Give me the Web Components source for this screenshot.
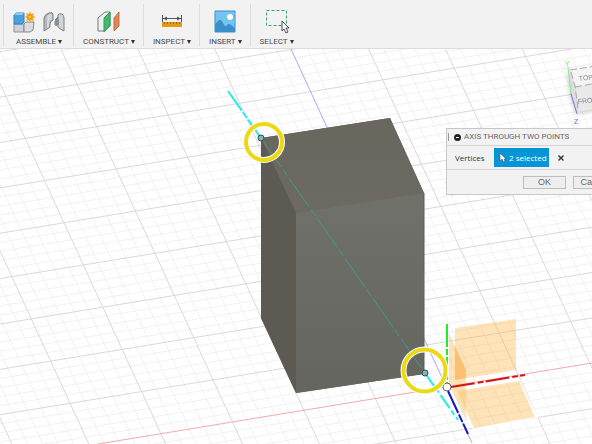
<!DOCTYPE html>
<html lang="en">
<head>
<meta charset="utf-8">
<meta name="viewport" content="width=device-width, initial-scale=1">
<title>Axis Through Two Points</title>
<style>
    html, body{
        height: 100%;
        margin: 0;
        overflow: hidden;
        font-family: Roboto, "Liberation Sans", sans-serif;
    }
</style>
</head>
<body>
<cad-app>
    <tool-bar slot="toolbar">
        <tool-group label="Assemble">
            <svg width="22" height="24" viewBox="0 0 22 24">
                <path d="M1 14h10v8H1z" fill="#cfd3d8" stroke="#8d9196"/>
                <path d="M11 14l2-2h8l-1 8-3 2h-6z" fill="#dcdde0" stroke="#85898e"/>
                <path d="M1 5l2-2h8v9l-2 2H1z" fill="#4a9fde" stroke="#3483c0"/>
                <path d="M1 5l2-2h8l-2 2z" fill="#8dccf4"/>
                <path d="M17 1l1 3 3-1-1 3 3 1-3 1 1 3-3-1-1 3-1-3-3 1 1-3-3-1 3-1-1-3 3 1z" fill="#f9a51a"/>
                <circle cx="17" cy="7" r="2" fill="#ffd04a" stroke="#e28714"/>
            </svg>
            <svg width="22" height="24" viewBox="0 0 22 24">
                <path d="M1 8q1-4 5-5 4-1 4 1v6q-3 1-3 4v3l-6 4z" fill="#b5b9bd" stroke="#7c8085"/>
                <path d="M4 8q0-3 3-4 2 0 2 1v4q-3 1-3 4v4l-2 1z" fill="#d5d7d9"/>
                <path d="M12 11l3-3V5q1-2 4-1 2 1 2 4v13l-5-3q-1-3-4-3z" fill="#d2d5d7" stroke="#7c8085"/>
                <path d="M12 11l4-3v7q-2 1-4 0z" fill="#8d9194"/>
                <path d="M12 10l3-3" stroke="#3f8fd0"/>
            </svg>
        </tool-group>
        <tool-group label="Construct">
            <svg width="24" height="24" viewBox="0 0 24 24">
                <path d="M1 8l7-6h5v14l-6 5H1z" fill="#eeefef" stroke="#767a7d"/>
                <path d="M7 8l6-6v14l-6 6z" fill="#43b96c" stroke="#309e59"/>
                <path d="M17 8l5-6v14l-5 5z" fill="#df8652" stroke="#c27547"/>
            </svg>
        </tool-group>
        <tool-group label="Inspect">
            <svg width="22" height="24" viewBox="0 0 22 24">
                <path d="M1.500 5v8M20.500 5v8M2 8.500h18" stroke="#55585b" fill="none"/>
                <path d="M2 8.500l4-2v4zM20 8.500l-4-2v4z" fill="#55585b"/>
                <path d="M1 12h20v5H1z" fill="#e59a17"/>
                <path d="M3.500 12v2M6.500 12v2M9.500 12v2M12.500 12v2M15.500 12v2M18.500 12v2" stroke="#996211" fill="none"/>
            </svg>
        </tool-group>
        <tool-group label="Insert">
            <svg width="22" height="24" viewBox="0 0 22 24">
                <path d="M1 1h20v21H1z" fill="#75c3f3" stroke="#3d92c9"/>
                <circle cx="16" cy="7" r="3" fill="#fffbe6"/>
                <path d="M1 15q3-5 5-5 2 0 4 5 2 2 3 0 2-2 4 0l4 3v4H1z" fill="#3a90c8"/>
            </svg>
        </tool-group>
        <tool-group label="Select">
            <svg width="24" height="24" viewBox="0 0 24 24">
                <path d="M1.500 .5h20v15h-20z" fill="none" stroke="#3da466" stroke-dasharray="3 2"/>
                <path d="M17 11v10l2-2 2 4 2-1-2-4h3z" fill="#fff" stroke="#4c4f52"/>
            </svg>
        </tool-group>
    </tool-bar>
    <model-view></model-view>
    <view-cube slot="cube"></view-cube>
    <command-dialog slot="dialog" heading="Axis through two points">
        <selection-input label="Vertices" count="2"></selection-input>
    </command-dialog>
</cad-app>

<script>
class CadApp extends HTMLElement {
    constructor() {
        super()
        this.attachShadow({ mode: 'open' }).innerHTML = `
            <style>
                :host{
                    display: flex;
                    flex-direction: column;
                    height: 100%;
                }
                main{
                    position: relative;
                    flex: 1;
                    min-height: 0;
                    overflow: hidden;
                }
                /* panels floating over the canvas */
                slot[name=cube]::slotted(*){
                    position: absolute;
                    top: 7px;
                    right: -22px;
                }
                slot[name=dialog]::slotted(*){
                    position: absolute;
                    top: 79px;
                    right: -34px;
                }
            </style>
            <slot name="toolbar"></slot>
            <main>
                <slot></slot>
                <slot name="cube"></slot>
                <slot name="dialog"></slot>
            </main>
        `
    }
}

class ToolBar extends HTMLElement {
    constructor() {
        super()
        this.attachShadow({ mode: 'open' }).innerHTML = `
            <style>
                :host{
                    display: flex;
                    box-sizing: border-box;
                    height: 49px;
                    padding: 4px 3px 2px;
                    background-color: #f2f2f2;
                    border-bottom: 1px solid #dcdcdc;
                }
            </style>
            <slot></slot>
        `
    }
}

class ToolGroup extends HTMLElement {
    constructor() {
        super()
        this._shadowDom = this.attachShadow({ mode: 'open' })
    }

    connectedCallback() {
        this._shadowDom.innerHTML = `
            <style>
                :host{
                    display: flex;
                    border-left: 1px solid #dcdcdc;
                }
                button{
                    display: flex;
                    flex-direction: column;
                    align-items: center;
                    gap: 3px;
                    margin: 0;
                    padding: 6px 8px 0 9px;
                    border: 0;
                    background: none;
                    color: #4a4a4a;
                    font: 8px/10px Roboto, "Liberation Sans", sans-serif;
                    text-transform: uppercase;
                }
                .icons{
                    display: flex;
                    gap: 8px;
                    height: 24px;
                }
                .label{
                    display: flex;
                    align-items: center;
                    gap: 2px;
                }
                .arrow{
                    border: 2px solid transparent;
                    border-top: 4px solid #333;
                    border-bottom: 0;
                }
            </style>
            <button type="button">
                <span class="icons"><slot></slot></span>
                <span class="label">${this.getAttribute('label')}<span class="arrow"></span></span>
            </button>
        `
    }
}

class ModelView extends HTMLElement {
    constructor() {
        super()
        this._shadowDom = this.attachShadow({ mode: 'open' })
    }

    // the ground grid, seen in parallel projection from the origin
    grid() {
        const origin = [447, 387]
        const a = [71.5, -11.7]
        const b = [19.4, 42.2]
        let minor = ''
        let major = ''
        const line = (from, dir) =>
            `M${from[0] - dir[0] * 14} ${from[1] - dir[1] * 14}L${from[0] + dir[0] * 14} ${from[1] + dir[1] * 14}`
        for (let i = -60; i <= 60; i++) {
            if (i === 0) continue
            const k = i / 5
            const d = line([origin[0] + a[0] * k, origin[1] + a[1] * k], b)
                + line([origin[0] + b[0] * k, origin[1] + b[1] * k], a)
            if (i % 5) minor += d
            else major += d
        }
        return `<path d="${minor}" stroke="#f1f1f1"/><path d="${major}" stroke="#d9d9d9"/>`
    }

    connectedCallback() {
        this._shadowDom.innerHTML = `
            <style>
                :host{
                    display: block;
                    height: 100%;
                    background-color: #fff;
                }
                svg{
                    display: block;
                    width: 100%;
                    height: 100%;
                }
            </style>
            <svg viewBox="0 49 592 395" preserveAspectRatio="xMidYMid slice" fill="none" role="img" aria-label="Box with an axis through two corners">
                <defs>
                    <linearGradient id="top" x1="0" y1="0" x2="0" y2="1">
                        <stop offset="0" stop-color="#69665d"/><stop offset="1" stop-color="#6c6a63"/>
                    </linearGradient>
                    <linearGradient id="front" x1="0" y1="0" x2="0" y2="1">
                        <stop offset="0" stop-color="#70716b"/><stop offset="1" stop-color="#656560"/>
                    </linearGradient>
                </defs>
                ${this.grid()}
                <path d="M98 444L592 363" stroke="#f4a9ae"/>
                <path d="M291 49L472 443" stroke="#aaa8f2"/>

                <path d="M261 138L390 118L424 193V374L296 393L261 318Z" fill="#66655e"/>
                <path d="M261 138L390 118L424 193L296 213Z" fill="url(#top)"/>
                <path d="M261 138L296 213V393L261 318Z" fill="#5c5a53"/>
                <path d="M296 213L424 193V374L296 393Z" fill="url(#front)"/>
                <path d="M424 193V374" stroke="#5e5f59"/>

                <path d="M456 391L519 380L537 417L474 429Z" stroke="#fff" stroke-width="2"/>
                <g fill="#ffbd55" fill-opacity=".42">
                    <path d="M455 328L516 319V370L455 380Z"/>
                    <path d="M449 333L466 370V421L449 384Z"/>
                    <path d="M457 391L519 381L535 417L474 428Z"/>
                </g>
                <path d="M455 346L466 370V378L455 380Z" fill="#f7a840" fill-opacity=".4"/>

                <g stroke-width="2">
                    <path d="M447 324V383" stroke="#22ee27" stroke-dasharray="23 2 6 2"/>
                    <path d="M451 387L525 375" stroke="#d81212" stroke-dasharray="24 3 6 2"/>
                    <path d="M448 391L468 434" stroke="#1218c6" stroke-dasharray="24 2 8 2"/>
                    <path d="M228 91L261 138" stroke="#20efe4" stroke-dasharray="24 2 7 2"/>
                    <path d="M425 373L458 420" stroke="#20efe4" stroke-dasharray="16 3 5 3"/>
                </g>
                <path d="M261 138L425 373" stroke="#3d9c8a" stroke-dasharray="35 3 8 3"/>
                <circle cx="447" cy="387" r="4" fill="#fff" stroke="#666"/>
                <circle cx="261" cy="138" r="3" fill="#7cb8b8" stroke="#344c4e"/>
                <circle cx="425" cy="373" r="3" fill="#7cb8b8" stroke="#344c4e"/>

                <g stroke="#fff" stroke-width="6">
                    <circle cx="264" cy="142" r="18"/>
                    <circle cx="424.500" cy="370.500" r="21"/>
                </g>
                <g stroke="#ecd915" stroke-width="4">
                    <circle cx="264" cy="142" r="18"/>
                    <circle cx="424.500" cy="370.500" r="21"/>
                </g>
            </svg>
        `
    }
}

class ViewCube extends HTMLElement {
    constructor() {
        super()
        this.attachShadow({ mode: 'open' }).innerHTML = `
            <style>
                :host{
                    display: block;
                    width: 54px;
                    height: 70px;
                }
                svg{
                    display: block;
                    filter: drop-shadow(-1px 2px 2px #0003);
                }
                text{
                    font: 7px "Liberation Sans", sans-serif;
                }
            </style>
            <svg width="54" height="70" viewBox="0 0 54 70" fill="none">
                <path d="M10 14L50 8L54 24L15 32Z" fill="#f4f4f4"/>
                <path d="M15 32L54 24V50L18 56Z" fill="#e9e9eb"/>
                <path d="M10 14L15 32L18 56L12 38Z" fill="#dedee2"/>
                <path d="M10 14L50 8M15 31L54 24M11 16L15 30L18 52" stroke="#aaa" stroke-dasharray="7 3"/>
                <path d="M8 11L11 38" stroke="#8ee68e"/>
                <path d="M11 38L17 58" stroke="#7777d8"/>
                <text x="5" y="10" fill="#78e878">Y</text>
                <text x="14" y="68" fill="#6a6ae0">Z</text>
                <text x="19" y="25" fill="#8c8c8c" transform="rotate(-6 19 25)">TOP</text>
                <text x="18" y="48" fill="#858585" transform="rotate(-6 18 48)">FRONT</text>
            </svg>
        `
    }
}

class CommandDialog extends HTMLElement {
    constructor() {
        super()
        this._shadowDom = this.attachShadow({ mode: 'open' })
    }

    connectedCallback() {
        this._shadowDom.innerHTML = `
            <style>
                :host{
                    display: block;
                    box-sizing: border-box;
                    width: 180px;
                    background-color: #f2f2f2;
                    border: 1px solid #c8c8c8;
                    color: #666;
                    font-size: 8px;
                    line-height: 16px;
                }
                header{
                    display: flex;
                    align-items: center;
                    gap: 3px;
                    padding-left: 1px;
                    border-bottom: 1px solid #d2d2d2;
                }
                h2{
                    margin: 0;
                    font-size: inherit;
                    font-weight: 400;
                    text-transform: uppercase;
                }
                .grip{
                    width: 1px;
                    height: 8px;
                    margin-right: 2px;
                    background-color: #999;
                }
                footer{
                    display: flex;
                    justify-content: flex-end;
                    gap: 7px;
                    padding: 6px 9px 5px;
                    border-top: 1px solid #d2d2d2;
                }
                footer button{
                    box-sizing: border-box;
                    width: 43px;
                    height: 13px;
                    padding: 0;
                    border: 1px solid #bdbdbd;
                    background-color: #eee;
                    color: #666;
                    font: 9px/11px "Liberation Sans", sans-serif;
                }
            </style>
            <header>
                <span class="grip"></span>
                <svg width="7" height="7" viewBox="0 0 7 7"><circle cx="3.500" cy="3.500" r="3.500" fill="#222"/><path d="M2 3.500h3" stroke="#fff"/></svg>
                <h2>${this.getAttribute('heading')}</h2>
            </header>
            <slot></slot>
            <footer>
                <button type="button">OK</button>
                <button type="button">Cancel</button>
            </footer>
        `
    }
}

class SelectionInput extends HTMLElement {
    constructor() {
        super()
        this._shadowDom = this.attachShadow({ mode: 'open' })
    }

    connectedCallback() {
        this._shadowDom.innerHTML = `
            <style>
                :host{
                    display: flex;
                    align-items: center;
                    padding: 2px 8px;
                    color: #333;
                    font: 8px/18px "Open Sans", "Noto Sans", sans-serif;
                }
                label{
                    width: 39px;
                }
                button{
                    display: flex;
                    align-items: center;
                    padding: 0;
                    border: 0;
                    background: none;
                    color: inherit;
                    font: inherit;
                }
                .pick{
                    box-sizing: border-box;
                    width: 55px;
                    height: 19px;
                    gap: 2px;
                    padding-left: 5px;
                    background-color: #0696d7;
                    color: #fff;
                    white-space: nowrap;
                }
                .clear{
                    margin-left: 9px;
                }
            </style>
            <label for="pick">${this.getAttribute('label')}</label>
            <button class="pick" id="pick" type="button">
                <svg width="8" height="11" viewBox="0 0 8 11"><path d="M1 1v8l2-2 1 3 2-1-1-2h2z" fill="#fff" stroke="#46545c" stroke-width=".6"/></svg>
                ${this.getAttribute('count')} selected
            </button>
            <button class="clear" type="button" aria-label="Clear selection">
                <svg width="6" height="6" viewBox="0 0 6 6"><path d="M.5.5l5 5M5.500.5l-5 5" stroke="#333" stroke-width="1.400"/></svg>
            </button>
        `
    }
}

window.customElements.define('cad-app', CadApp)
window.customElements.define('tool-bar', ToolBar)
window.customElements.define('tool-group', ToolGroup)
window.customElements.define('model-view', ModelView)
window.customElements.define('view-cube', ViewCube)
window.customElements.define('command-dialog', CommandDialog)
window.customElements.define('selection-input', SelectionInput)
</script>
</body>
</html>
